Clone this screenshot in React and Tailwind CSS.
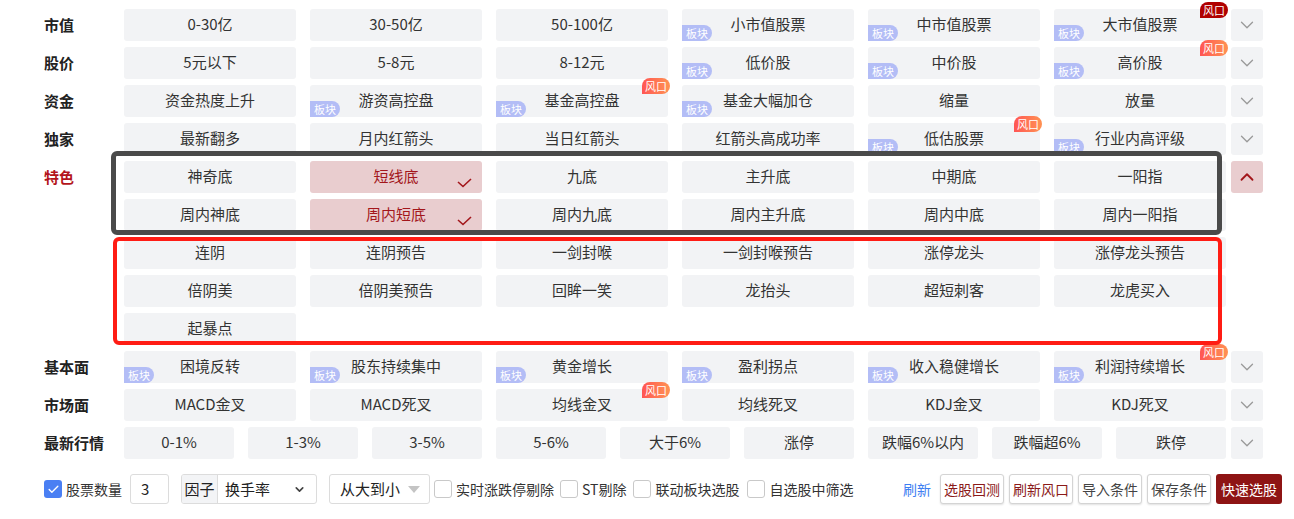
import React from 'react';
import { ChevronDown, ChevronUp, Check } from 'lucide-react';

const FONT = { fontFamily: '"Noto Sans CJK SC", "Noto Sans", sans-serif' };

// b = 板块 badge, f = 风口 badge ('dark' | 'hot'), s = selected
const groups = [
  {
    label: '市值',
    cols: 6,
    items: [
      { t: '0-30亿' }, { t: '30-50亿' }, { t: '50-100亿' },
      { t: '小市值股票', b: true }, { t: '中市值股票', b: true }, { t: '大市值股票', b: true, f: 'dark' },
    ],
  },
  {
    label: '股价',
    cols: 6,
    items: [
      { t: '5元以下' }, { t: '5-8元' }, { t: '8-12元' },
      { t: '低价股', b: true }, { t: '中价股', b: true }, { t: '高价股', b: true, f: 'hot' },
    ],
  },
  {
    label: '资金',
    cols: 6,
    items: [
      { t: '资金热度上升' }, { t: '游资高控盘', b: true }, { t: '基金高控盘', b: true, f: 'hot' },
      { t: '基金大幅加仓', b: true }, { t: '缩量' }, { t: '放量' },
    ],
  },
  {
    label: '独家',
    cols: 6,
    items: [
      { t: '最新翻多' }, { t: '月内红箭头' }, { t: '当日红箭头' },
      { t: '红箭头高成功率' }, { t: '低估股票', b: true, f: 'hot' }, { t: '行业内高评级', b: true },
    ],
  },
  {
    label: '特色',
    active: true,
    open: true,
    cols: 6,
    items: [
      { t: '神奇底' }, { t: '短线底', s: true }, { t: '九底' }, { t: '主升底' }, { t: '中期底' }, { t: '一阳指' },
      { t: '周内神底' }, { t: '周内短底', s: true }, { t: '周内九底' }, { t: '周内主升底' }, { t: '周内中底' }, { t: '周内一阳指' },
      { t: '连阴' }, { t: '连阴预告' }, { t: '一剑封喉' }, { t: '一剑封喉预告' }, { t: '涨停龙头' }, { t: '涨停龙头预告' },
      { t: '倍阴美' }, { t: '倍阴美预告' }, { t: '回眸一笑' }, { t: '龙抬头' }, { t: '超短刺客' }, { t: '龙虎买入' },
      { t: '起暴点' },
    ],
  },
  {
    label: '基本面',
    cols: 6,
    items: [
      { t: '困境反转', b: true }, { t: '股东持续集中', b: true }, { t: '黄金增长', b: true },
      { t: '盈利拐点', b: true }, { t: '收入稳健增长', b: true }, { t: '利润持续增长', b: true, f: 'hot' },
    ],
  },
  {
    label: '市场面',
    cols: 6,
    items: [
      { t: 'MACD金叉' }, { t: 'MACD死叉' }, { t: '均线金叉', f: 'hot' },
      { t: '均线死叉' }, { t: 'KDJ金叉' }, { t: 'KDJ死叉' },
    ],
  },
  {
    label: '最新行情',
    cols: 9,
    items: [
      { t: '0-1%' }, { t: '1-3%' }, { t: '3-5%' }, { t: '5-6%' }, { t: '大于6%' },
      { t: '涨停' }, { t: '跌幅6%以内' }, { t: '跌幅超6%' }, { t: '跌停' },
    ],
  },
];

const Chip = ({ item }) => (
  <div
    className={`relative h-[32px] pb-[3px] rounded-[3px] flex items-center justify-center text-[15px] ${
      item.s ? 'bg-[#e9cdcf] text-[#a3161b]' : 'bg-[#f2f3f5] text-[#333]'
    }`}
  >
    <span className="leading-none">{item.t}</span>
    {item.b && (
      <span className="absolute left-0 bottom-0 h-[16px] w-[30px] rounded-tl-[8px] rounded-r-full bg-[#b3bdf6] text-white text-[11px] leading-[16px] text-center">
        板块
      </span>
    )}
    {item.f && (
      <span
        className={`absolute -top-[7px] -right-[2px] h-[16px] w-[28px] rounded-t-[8px] rounded-br-[8px] text-white text-[11px] leading-[16px] text-center ${
          item.f === 'dark' ? 'bg-[#b00000]' : 'bg-linear-to-r from-[#ff5454] to-[#ff9152]'
        }`}
      >
        风口
      </span>
    )}
    {item.s && (
      <svg className="absolute right-[10px] bottom-[5px]" width="15" height="10" viewBox="0 0 15 10">
        <polyline points="1,4 6,8.5 14,1" fill="none" stroke="#a3161b" strokeWidth="1.6" />
      </svg>
    )}
  </div>
);

const Group = ({ g }) => (
  <div className="flex items-start">
    <div
      className={`w-[124px] pl-[44px] h-[32px] flex items-center text-[15px] font-bold ${
        g.active ? 'text-[#b3141b]' : 'text-[#222]'
      }`}
    >
      {g.label}
    </div>
    <div className={`w-[1102px] grid gap-x-[14px] gap-y-[6px] ${g.cols === 9 ? 'grid-cols-9' : 'grid-cols-6'}`}>
      {g.items.map((it, i) => (
        <Chip key={i} item={it} />
      ))}
    </div>
    <div
      className={`ml-[5px] w-[32px] h-[32px] rounded-[3px] flex items-center justify-center ${
        g.open ? 'bg-[#e9cdcf]' : 'bg-[#f2f3f5]'
      }`}
    >
      {g.open ? (
        <ChevronUp size={22} strokeWidth={2} className="text-[#a3161b]" />
      ) : (
        <ChevronDown size={22} strokeWidth={1.4} className="text-[#999]" />
      )}
    </div>
  </div>
);

const Box = ({ checked, label }) => (
  <label className="flex items-center gap-[4px] text-[14px] text-[#333]">
    {checked ? (
      <span className="w-[18px] h-[18px] rounded-[3px] bg-[#4a7ff3] flex items-center justify-center">
        <Check size={13} strokeWidth={2.5} className="text-white" />
      </span>
    ) : (
      <span className="w-[18px] h-[18px] rounded-[3px] border border-[#c9c9c9] bg-white" />
    )}
    <span>{label}</span>
  </label>
);

const Btn = ({ children, tone }) => (
  <button
    className={`h-[30px] rounded-[3px] text-[14px] ${
      tone === 'primary'
        ? 'px-[5px] bg-[#8e1414] text-white'
        : `px-[3px] bg-white border border-[#d4d4d4] shadow-[0_1px_2px_rgba(0,0,0,0.12)] ${tone === 'red' ? 'text-[#8b1a1a]' : 'text-[#444]'}`
    }`}
  >
    {children}
  </button>
);

export default function App() {
  return (
    <div className="relative w-[1294px] h-[519px] bg-white overflow-hidden" style={FONT}>
      <div className="pt-[9px] flex flex-col gap-[6px]">
        {groups.map((g) => (
          <Group key={g.label} g={g} />
        ))}
      </div>

      {/* bottom toolbar */}
      <div className="mt-[15px] pl-[44px] pr-[12px] flex items-center h-[30px]">
        <Box checked label="股票数量" />
        <div className="ml-[8px] w-[39px] h-[30px] border border-[#dcdcdc] rounded-[3px] flex items-center pl-[10px] text-[15px] text-[#222]">
          3
        </div>
        <div className="ml-[12px] w-[136px] h-[30px] border border-[#dcdcdc] rounded-[3px] flex items-center overflow-hidden text-[15px] text-[#222]">
          <span className="h-full w-[36px] bg-[#f3f4f6] border-r border-[#dcdcdc] flex items-center justify-center">因子</span>
          <span className="pl-[7px] flex-1">换手率</span>
          <ChevronDown size={13} strokeWidth={3} className="mr-[10px] text-[#444]" />
        </div>
        <div className="ml-[12px] w-[101px] h-[30px] border border-[#dcdcdc] rounded-[3px] flex items-center text-[15px] text-[#222]">
          <span className="pl-[10px] flex-1">从大到小</span>
          <svg className="mr-[9px]" width="12" height="7" viewBox="0 0 12 7">
            <polygon points="0,0 12,0 6,7" fill="#c4c4c4" />
          </svg>
        </div>
        <div className="ml-[4px]">
          <Box label="实时涨跌停剔除" />
        </div>
        <div className="ml-[6px]">
          <Box label="ST剔除" />
        </div>
        <div className="ml-[7px]">
          <Box label="联动板块选股" />
        </div>
        <div className="ml-[8px]">
          <Box label="自选股中筛选" />
        </div>
        <div className="flex-1" />
        <span className="text-[14px] text-[#3d7ef2] mr-[9px]">刷新</span>
        <div className="flex items-center gap-[5px]">
          <Btn tone="red">选股回测</Btn>
          <Btn tone="red">刷新风口</Btn>
          <Btn>导入条件</Btn>
          <Btn>保存条件</Btn>
          <Btn tone="primary">快速选股</Btn>
        </div>
      </div>

      {/* annotation frames */}
      <div className="absolute left-[111px] top-[151px] w-[1111px] h-[84px] border-[5px] border-[#4a4a4a] rounded-[6px] pointer-events-none" />
      <div className="absolute left-[113px] top-[237px] w-[1109px] h-[108px] border-[4px] border-[#ff1c14] rounded-[6px] pointer-events-none" />
    </div>
  );
}
